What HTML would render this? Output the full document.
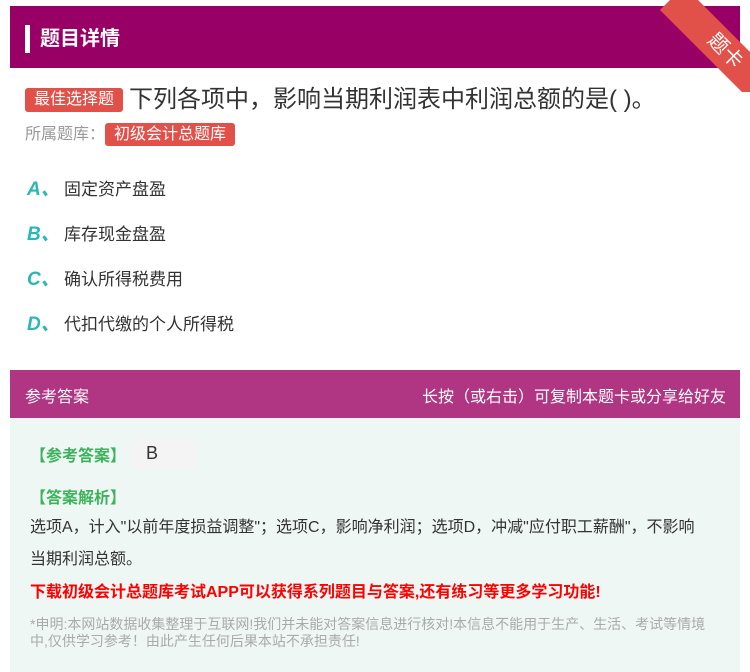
<!DOCTYPE html>
<html><head><meta charset="utf-8"><style>
*{margin:0;padding:0;box-sizing:border-box}
body{width:750px;height:672px;background:#fff;font-family:"Liberation Sans","Noto Sans CJK SC",sans-serif;position:relative;overflow:hidden}
.hd{position:absolute;left:10px;top:6px;width:730px;height:62px;background:#990066}
.hd .bar{position:absolute;left:15px;top:19px;width:5px;height:28px;background:#fff}
.hd .t{position:absolute;left:30px;top:16px;color:#fff;font-size:20px;font-weight:bold}
.ribbon{position:absolute;right:0;top:0;width:92px;height:92px;overflow:hidden}
.ribbon div{position:absolute;width:150px;height:34px;background:#e2504a;transform:rotate(45deg);transform-origin:0 0;left:26px;top:-14px;color:#fff;font-size:20px;text-align:center;line-height:34px}
.tag{display:inline-block;background:#e2504a;color:#fff;border-radius:3px}
.q{position:absolute;left:25px;top:79px;font-size:24px;color:#333}
.q .tag{font-size:16px;padding:2px 9px;vertical-align:3px;margin-right:6px;line-height:20px}
.lib{position:absolute;left:25px;top:120px;font-size:16px;color:#999}
.lib .tag{font-size:16px;padding:1px 9px;line-height:21px}
.opt{position:absolute;left:27px;font-size:17px;color:#333}
.opt b{display:inline-block;width:37px;color:#2bb7b3;font-style:italic;font-size:19px}
.ah{position:absolute;left:10px;top:370px;width:730px;height:48px;background:#b03583;color:#fff;font-size:16px}
.ah .l{position:absolute;left:15px;top:13px}.ah .r{position:absolute;right:14px;top:13px}
.ab{position:absolute;left:10px;top:418px;width:730px;height:254px;background:#eff7f5}
.g{position:absolute;color:#3cb35b;font-size:16px;font-weight:bold}
.txt{position:absolute;left:30px;top:512px;width:680px;font-size:16px;color:#333;line-height:32px}
.red{position:absolute;left:30px;top:578px;color:#f00;font-size:16px;font-weight:bold}
.note{position:absolute;left:30px;top:616px;width:690px;color:#aaa;font-size:14px;line-height:17px}
</style></head><body>
<div class="hd"><div class="bar"></div><div class="t">题目详情</div></div>
<div class="ribbon"><div>题卡</div></div>
<div class="q"><span class="tag">最佳选择题</span>下列各项中，影响当期利润表中利润总额的是( )。</div>
<div class="lib">所属题库：<span class="tag">初级会计总题库</span></div>
<div class="opt" style="top:174px"><b>A、</b>固定资产盘盈</div>
<div class="opt" style="top:219px"><b>B、</b>库存现金盘盈</div>
<div class="opt" style="top:264px"><b>C、</b>确认所得税费用</div>
<div class="opt" style="top:309px"><b>D、</b>代扣代缴的个人所得税</div>
<div class="ah"><span class="l">参考答案</span><span class="r">长按（或右击）可复制本题卡或分享给好友</span></div>
<div class="ab"></div>
<div class="g" style="left:30px;top:442px">【参考答案】</div>
<div style="position:absolute;left:131px;top:439px;width:64px;height:30px;background:#f4f4f4;font-size:18px;color:#333;padding-left:15px;line-height:28px">B</div>
<div class="g" style="left:30px;top:484px">【答案解析】</div>
<div class="txt">选项A，计入"以前年度损益调整"；选项C，影响净利润；选项D，冲减"应付职工薪酬"，不影响当期利润总额。</div>
<div class="red">下载初级会计总题库考试APP可以获得系列题目与答案,还有练习等更多学习功能!</div>
<div class="note">*申明:本网站数据收集整理于互联网!我们并未能对答案信息进行核对!本信息不能用于生产、生活、考试等情境<br>中,仅供学习参考！由此产生任何后果本站不承担责任!</div>
</body></html>
